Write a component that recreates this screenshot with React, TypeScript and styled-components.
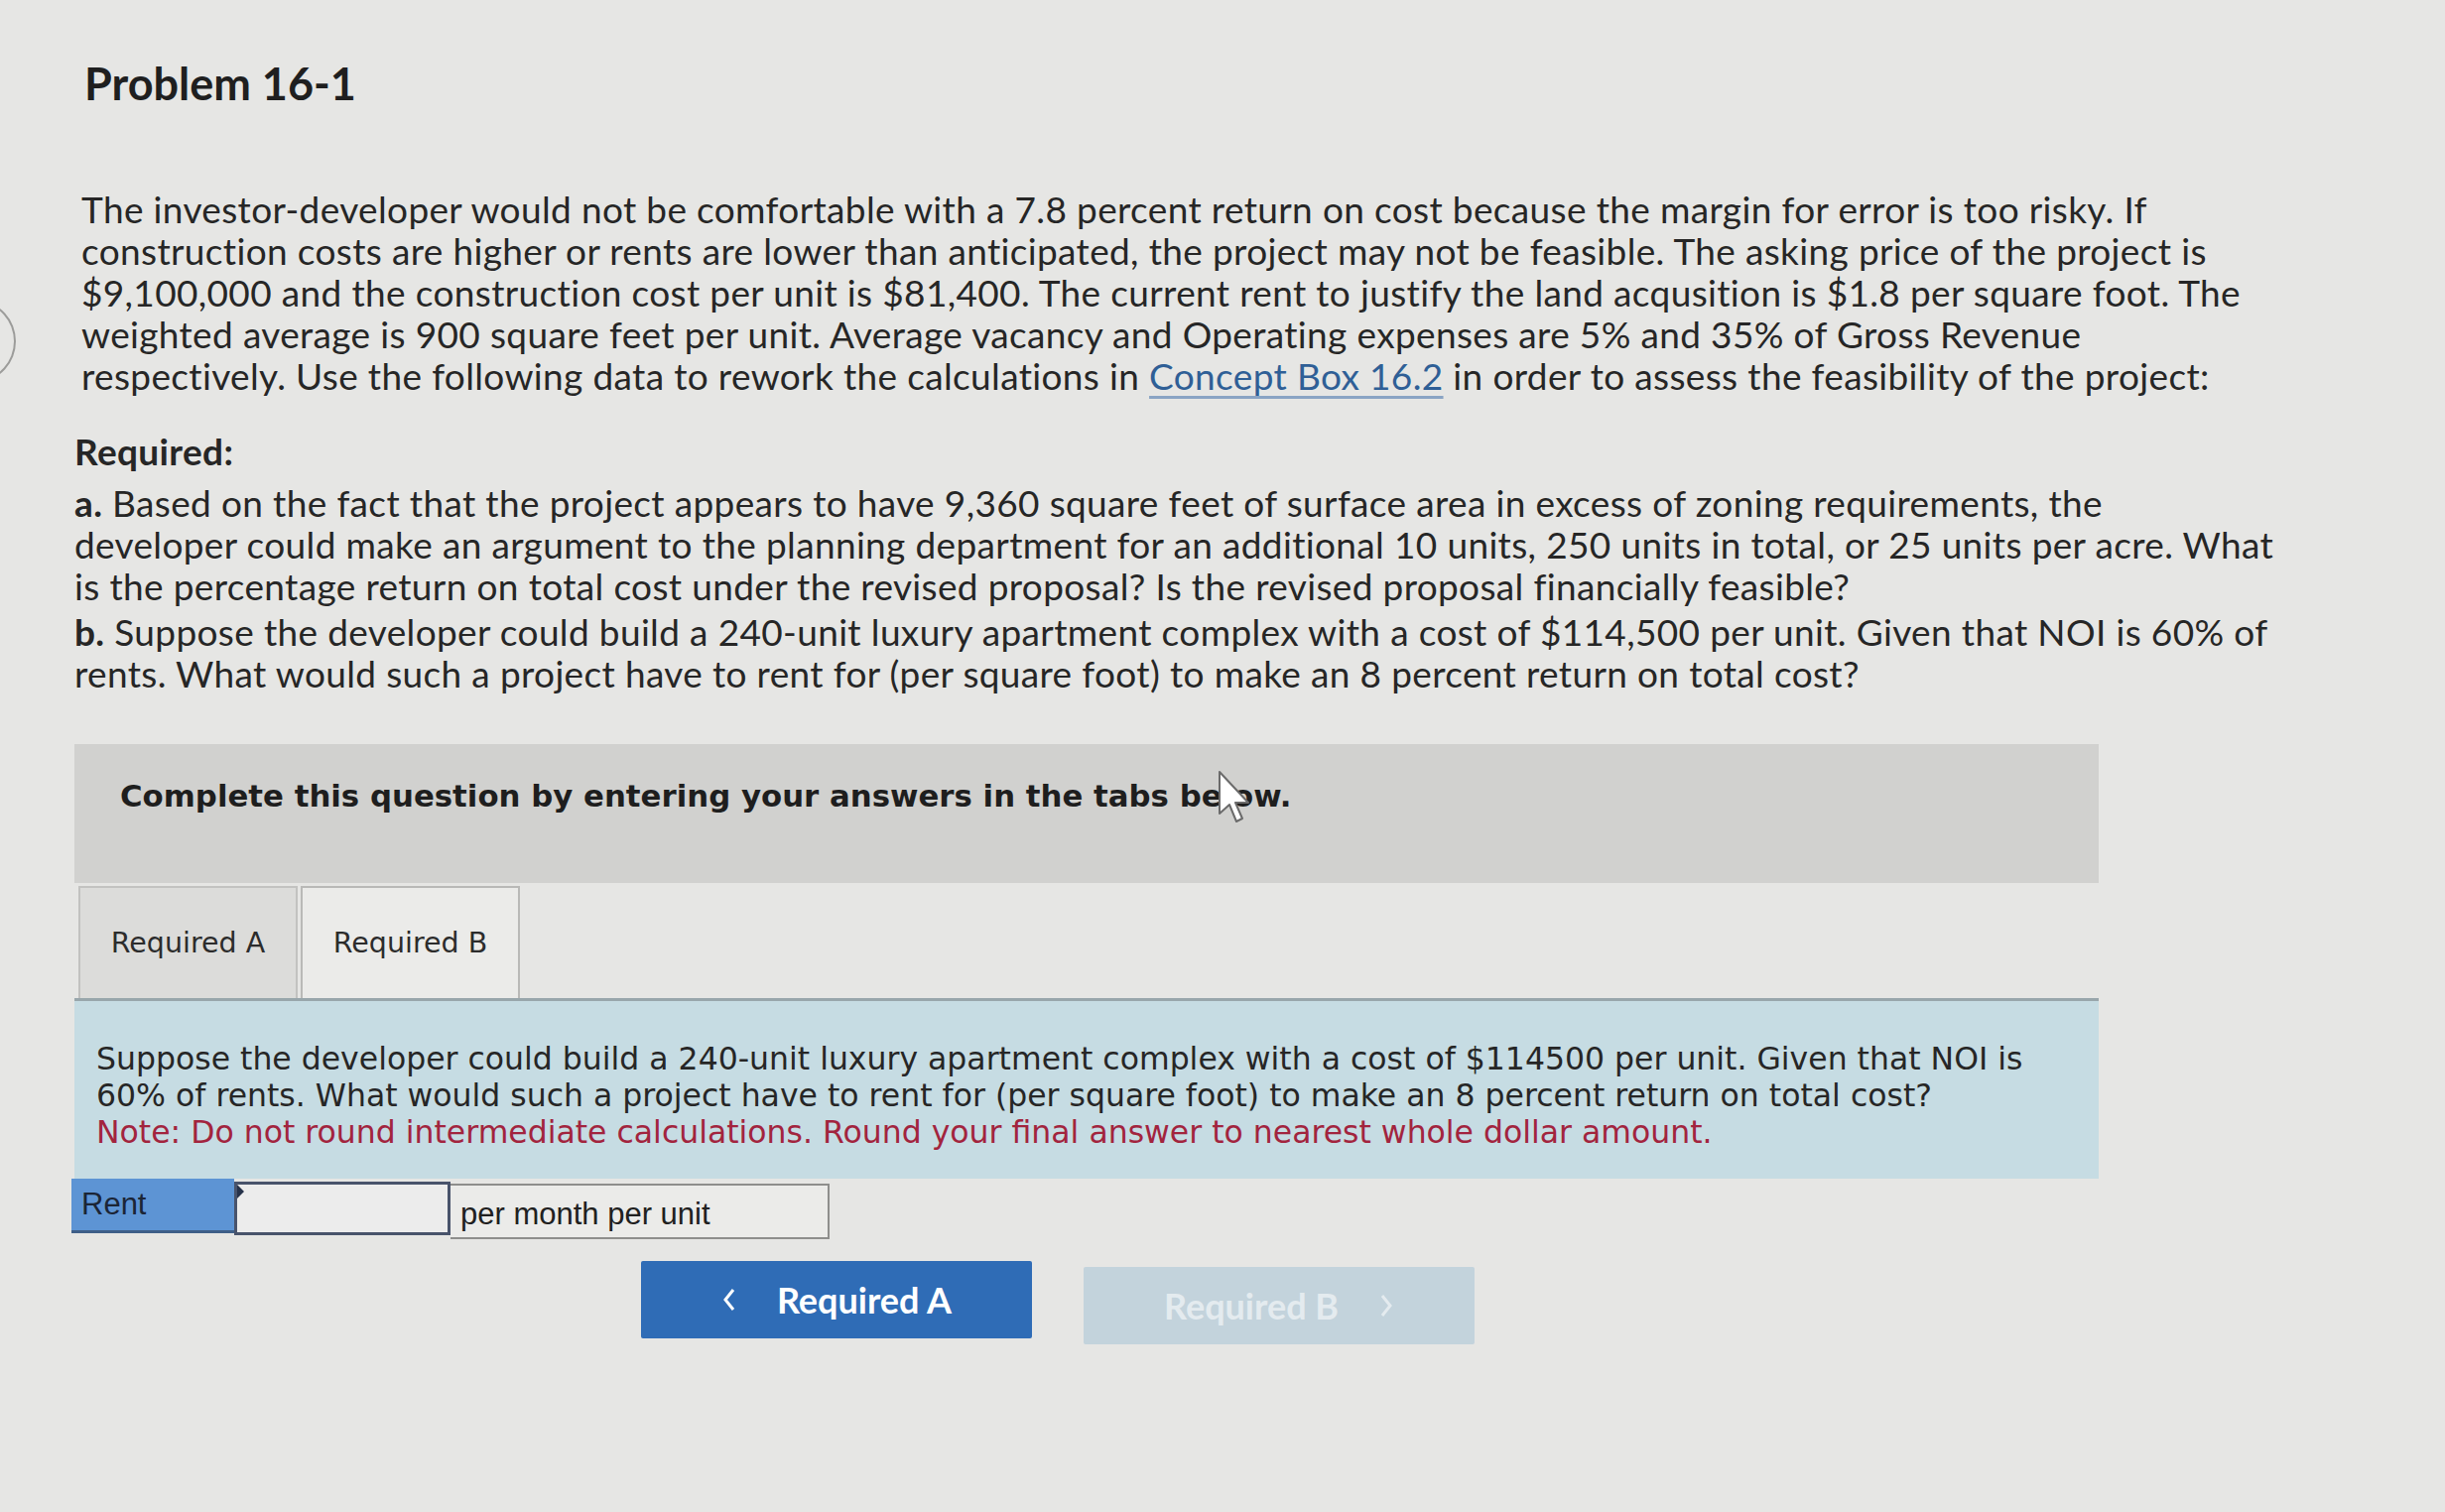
import styled, { createGlobalStyle } from 'styled-components';

const GlobalStyle = createGlobalStyle`
  html, body {
    margin: 0;
    padding: 0;
  }
  body {
    background: #e6e6e4;
    font-family: Lato, "Open Sans", sans-serif;
    color: #262626;
  }
`;

const Page = styled.div`
  position: relative;
  width: 2464px;
  min-height: 1524px;
  box-sizing: border-box;
  padding: 56px 0 0 75px;
  overflow: hidden;
`;

const EdgeRing = styled.div`
  position: absolute;
  left: -58px;
  top: 304px;
  width: 70px;
  height: 76px;
  border: 2px solid #9c9c9a;
  border-radius: 50%;
`;

const Title = styled.h1`
  margin: 0 0 0 10px;
  font-size: 45px;
  font-weight: 700;
  line-height: 56px;
  color: #1f1f1f;
`;

const Intro = styled.p`
  margin: 78px 0 0 7px;
  font-size: 37px;
  letter-spacing: 0.35px;
  line-height: 42px;
  white-space: nowrap;
`;

const Link = styled.a`
  color: #2f5f96;
  text-decoration: underline;
  text-decoration-color: #8aa4c4;
  text-underline-offset: 6px;
`;

const Required = styled.div`
  margin-top: 34px;
  font-size: 37px;
  letter-spacing: 0.35px;
  line-height: 42px;
  white-space: nowrap;
`;

const Bold = styled.span`
  font-weight: 700;
`;

const Part = styled.p<{ $first?: boolean }>`
  margin: ${(p) => (p.$first ? '10px' : '4px')} 0 0;
`;

const Banner = styled.div`
  position: relative;
  width: 2040px;
  height: 140px;
  box-sizing: border-box;
  margin-top: 50px;
  padding: 33px 0 0 46px;
  background: #d1d1cf;
  font-family: "DejaVu Sans", Verdana, sans-serif;
  font-weight: 700;
  font-size: 30.8px;
  line-height: 38px;
  color: #1e1e1e;
`;

const Cursor = styled.svg`
  position: absolute;
  left: 1152px;
  top: 26px;
`;

const Tabs = styled.div`
  display: flex;
  gap: 3px;
  margin-top: 3px;
  padding-left: 4px;
`;

const Tab = styled.div<{ $active?: boolean }>`
  width: 221px;
  height: 113px;
  box-sizing: border-box;
  display: flex;
  align-items: center;
  justify-content: center;
  border: 2px solid ${(p) => (p.$active ? '#b9b9b7' : '#c2c2c0')};
  border-bottom: none;
  background: ${(p) => (p.$active ? '#ebebe9' : '#dcdcda')};
  font-family: "DejaVu Sans", Verdana, sans-serif;
  font-size: 28.5px;
  color: #2c2c2c;
`;

const Panel = styled.div`
  width: 2040px;
  box-sizing: border-box;
  padding: 40px 20px 28px 22px;
  border-top: 3px solid #98a6ab;
  background: #c6dce3;
  font-family: "DejaVu Sans", Verdana, sans-serif;
  font-size: 31.5px;
  line-height: 37px;
  color: #262626;
  white-space: nowrap;
`;

const Note = styled.span`
  color: #a2243e;
`;

const AnswerRow = styled.div`
  display: flex;
  margin-left: -3px;
  font-family: "Liberation Sans", Arial, sans-serif;
  font-size: 31px;
`;

const RowLabel = styled.div`
  width: 164px;
  height: 55px;
  box-sizing: border-box;
  padding: 8px 0 0 10px;
  background: #5d94d4;
  border-bottom: 3px solid #3f5f88;
  color: #1b2536;
`;

const InputWrap = styled.div`
  position: relative;
  margin-top: 3px;
`;

const Field = styled.input`
  width: 218px;
  height: 54px;
  box-sizing: border-box;
  border: 3px solid #48536b;
  background: #ececec;
  outline: none;
  font: inherit;
`;

const Marker = styled.span`
  position: absolute;
  left: 3px;
  top: 3px;
  width: 0;
  height: 0;
  border-top: 7px solid transparent;
  border-bottom: 7px solid transparent;
  border-left: 7px solid #26324a;
`;

const UnitCell = styled.div`
  width: 382px;
  height: 56px;
  box-sizing: border-box;
  margin-top: 5px;
  padding: 11px 0 0 10px;
  border: 2px solid #8e8e8c;
  border-left: none;
  background: #ebebe9;
  color: #202020;
`;

const NavRow = styled.div`
  display: flex;
  justify-content: center;
  gap: 52px;
  width: 2040px;
  box-sizing: border-box;
  padding-right: 58px;
  margin-top: 22px;
`;

const NavButton = styled.button<{ $disabled?: boolean }>`
  display: flex;
  align-items: center;
  justify-content: center;
  gap: 40px;
  width: 394px;
  height: 78px;
  margin-top: ${(p) => (p.$disabled ? '6px' : '0')};
  border: none;
  border-radius: 2px;
  background: ${(p) => (p.$disabled ? '#c3d3dc' : '#2f6cb6')};
  color: ${(p) => (p.$disabled ? '#e4ebef' : '#ffffff')};
  font-family: Lato, "Open Sans", sans-serif;
  font-weight: 700;
  font-size: 36px;
  cursor: pointer;
`;

const Chevron = ({ dir }: { dir: 'left' | 'right' }) => (
  <svg width="16" height="26" viewBox="0 0 16 26">
    <path
      d={dir === 'left' ? 'M12 3 L4 13 L12 23' : 'M4 3 L12 13 L4 23'}
      fill="none"
      stroke="currentColor"
      strokeWidth="3"
    />
  </svg>
);

export default function App() {
  return (
    <>
      <GlobalStyle />
      <Page>
        <EdgeRing />
        <Title>Problem 16-1</Title>
        <Intro>
          The investor-developer would not be comfortable with a 7.8 percent return on cost because the margin for error is too risky. If
          <br />
          construction costs are higher or rents are lower than anticipated, the project may not be feasible. The asking price of the project is
          <br />
          $9,100,000 and the construction cost per unit is $81,400. The current rent to justify the land acqusition is $1.8 per square foot. The
          <br />
          weighted average is 900 square feet per unit. Average vacancy and Operating expenses are 5% and 35% of Gross Revenue
          <br />
          respectively. Use the following data to rework the calculations in <Link>Concept Box 16.2</Link> in order to assess the feasibility of the project:
        </Intro>
        <Required>
          <Bold>Required:</Bold>
          <Part $first>
            <Bold>a.</Bold> Based on the fact that the project appears to have 9,360 square feet of surface area in excess of zoning requirements, the
            <br />
            developer could make an argument to the planning department for an additional 10 units, 250 units in total, or 25 units per acre. What
            <br />
            is the percentage return on total cost under the revised proposal? Is the revised proposal financially feasible?
          </Part>
          <Part>
            <Bold>b.</Bold> Suppose the developer could build a 240-unit luxury apartment complex with a cost of $114,500 per unit. Given that NOI is 60% of
            <br />
            rents. What would such a project have to rent for (per square foot) to make an 8 percent return on total cost?
          </Part>
        </Required>
        <Banner>
          Complete this question by entering your answers in the tabs below.
          <Cursor width="34" height="56" viewBox="0 0 34 56">
            <path
              d="M2 2 L2 44 L12 35 L19 52 L25 49 L18 33 L31 33 Z"
              fill="#ffffff"
              stroke="#6b6b6b"
              strokeWidth="2"
              strokeLinejoin="round"
            />
          </Cursor>
        </Banner>
        <Tabs>
          <Tab>Required A</Tab>
          <Tab $active>Required B</Tab>
        </Tabs>
        <Panel>
          Suppose the developer could build a 240-unit luxury apartment complex with a cost of $114500 per unit. Given that NOI is
          <br />
          60% of rents. What would such a project have to rent for (per square foot) to make an 8 percent return on total cost?
          <br />
          <Note>Note: Do not round intermediate calculations. Round your final answer to nearest whole dollar amount.</Note>
        </Panel>
        <AnswerRow>
          <RowLabel>Rent</RowLabel>
          <InputWrap>
            <Field type="text" aria-label="Rent" />
            <Marker />
          </InputWrap>
          <UnitCell>per month per unit</UnitCell>
        </AnswerRow>
        <NavRow>
          <NavButton>
            <Chevron dir="left" />
            Required A
          </NavButton>
          <NavButton $disabled>
            Required B
            <Chevron dir="right" />
          </NavButton>
        </NavRow>
      </Page>
    </>
  );
}
